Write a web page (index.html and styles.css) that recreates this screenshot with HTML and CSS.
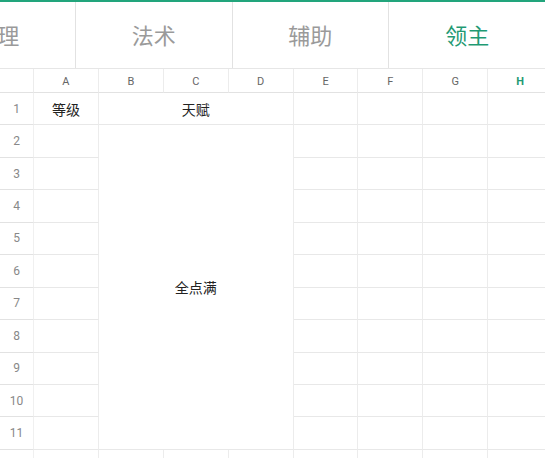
FILE: index.html
```html
<!DOCTYPE html>
<html lang="zh">
<head>
<meta charset="utf-8">
<link rel="stylesheet" href="styles.css">
</head>
<body>
<div class="tabs">
  <div class="tab first">管理</div>
  <div class="tab">法术</div>
  <div class="tab">辅助</div>
  <div class="tab active">领主</div>
</div>
<div class="sheet">
  <div class="c hd corner"></div>
  <div class="c hd">A</div>
  <div class="c hd">B</div>
  <div class="c hd">C</div>
  <div class="c hd">D</div>
  <div class="c hd">E</div>
  <div class="c hd">F</div>
  <div class="c hd">G</div>
  <div class="c hd sel">H</div>

  <div class="c rn">1</div>
  <div class="c txt">等级</div>
  <div class="c txt span3">天赋</div>
  <div class="c"></div><div class="c"></div><div class="c"></div><div class="c"></div>

  <div class="c rn">2</div><div class="c"></div>
  <div class="c txt big">全点满</div>
  <div class="c"></div><div class="c"></div><div class="c"></div><div class="c"></div>

  <div class="c rn">3</div><div class="c"></div>
  <div class="c"></div><div class="c"></div><div class="c"></div><div class="c"></div>
  <div class="c rn">4</div><div class="c"></div>
  <div class="c"></div><div class="c"></div><div class="c"></div><div class="c"></div>
  <div class="c rn">5</div><div class="c"></div>
  <div class="c"></div><div class="c"></div><div class="c"></div><div class="c"></div>
  <div class="c rn">6</div><div class="c"></div>
  <div class="c"></div><div class="c"></div><div class="c"></div><div class="c"></div>
  <div class="c rn">7</div><div class="c"></div>
  <div class="c"></div><div class="c"></div><div class="c"></div><div class="c"></div>
  <div class="c rn">8</div><div class="c"></div>
  <div class="c"></div><div class="c"></div><div class="c"></div><div class="c"></div>
  <div class="c rn">9</div><div class="c"></div>
  <div class="c"></div><div class="c"></div><div class="c"></div><div class="c"></div>
  <div class="c rn">10</div><div class="c"></div>
  <div class="c"></div><div class="c"></div><div class="c"></div><div class="c"></div>
  <div class="c rn">11</div><div class="c"></div>
  <div class="c"></div><div class="c"></div><div class="c"></div><div class="c"></div>

  <div class="c rn"></div><div class="c"></div><div class="c"></div><div class="c"></div><div class="c"></div>
  <div class="c"></div><div class="c"></div><div class="c"></div><div class="c"></div>
</div>
</body>
</html>
```
FILE: styles.css
```css
html, body {
  margin: 0;
  padding: 0;
  background: #fff;
  overflow: hidden;
  width: 545px;
  height: 458px;
}
body {
  font-family: Roboto, "Noto Sans CJK SC", sans-serif;
}
.tabs {
  display: flex;
  height: 66px;
  border-top: 2px solid #22a57c;
  border-bottom: 1px solid #e6e6e6;
  margin-left: -80.5px;
  width: 626px;
}
.tab {
  flex: 0 0 156.5px;
  box-sizing: border-box;
  display: flex;
  align-items: center;
  justify-content: center;
  font-family: "Noto Sans CJK SC", sans-serif;
  font-size: 22px;
  color: #9a9a9a;
  border-right: 1px solid #e2e2e2;
  padding-bottom: 3px;
}
.tab.active {
  color: #1f9a73;
  border-right: none;
}
.sheet {
  display: grid;
  grid-template-columns: 34px repeat(8, 64.9px);
  grid-template-rows: 24px repeat(12, 32.45px);
  width: 554px;
  height: 389px;
  overflow: hidden;
}
.c {
  box-sizing: border-box;
  border-right: 1px solid #ececec;
  border-bottom: 1px solid #e8e8e8;
  display: flex;
  align-items: center;
  justify-content: center;
  color: #222;
}
.hd {
  font-size: 11px;
  color: #666;
  border-bottom-color: #e2e2e2;
  padding-top: 1px;
}
.hd.sel {
  color: #1f9a73;
  font-weight: 700;
}
.rn {
  font-size: 12px;
  color: #888;
  border-bottom-color: #e2e2e2;
  border-right-color: #f0f0f0;
}
.txt {
  font-family: "Noto Sans CJK SC", sans-serif;
  font-size: 14px;
  color: #222;
}
.span3 {
  grid-column: span 3;
}
.big {
  grid-column: span 3;
  grid-row: span 10;
}
```
